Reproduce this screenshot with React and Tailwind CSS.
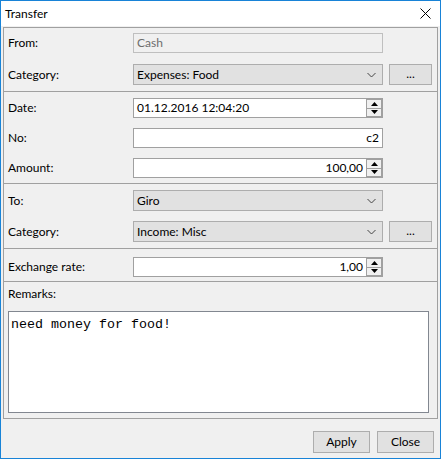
import React from "react";

const font = { fontFamily: "Lato, 'Noto Sans', sans-serif" };

function Chevron() {
  return (
    <svg width="9" height="6" viewBox="0 0 9 6" className="absolute right-[6px] top-1/2 -translate-y-1/2">
      <polyline points="0.5,1 4.5,5 8.5,1" fill="none" stroke="#444" strokeWidth="1" />
    </svg>
  );
}

function Combo({ text }) {
  return (
    <div className="relative w-[250px] h-[21px] border border-[#adadad] bg-[#e1e1e1] flex items-center pl-[3px] text-[12px] text-black">
      {text}
      <Chevron />
    </div>
  );
}

function DotsButton() {
  return (
    <div className="ml-[6px] w-[43px] h-[21px] border border-[#adadad] bg-[#e1e1e1] flex items-center justify-center text-[12px] text-black leading-none pb-[2px]">
      ...
    </div>
  );
}

function Spin() {
  return (
    <div className="flex flex-col h-full w-[16px] shrink-0">
      <div className="flex-1 border border-[#a0a0a0] bg-[#f0f0f0] flex items-center justify-center">
        <svg width="7" height="4" viewBox="0 0 7 4"><polygon points="3.5,0 7,4 0,4" fill="#000" /></svg>
      </div>
      <div className="flex-1 border border-t-0 border-[#a0a0a0] bg-[#f0f0f0] flex items-center justify-center">
        <svg width="7" height="4" viewBox="0 0 7 4"><polygon points="0,0 7,0 3.5,4" fill="#000" /></svg>
      </div>
    </div>
  );
}

function Edit({ text, right, spin }) {
  return (
    <div className="w-[250px] h-[20px] border border-[#a0a0a0] bg-white flex items-stretch text-[12px] text-black">
      <div className={"flex-1 flex items-center " + (right ? "justify-end pr-[3px]" : "pl-[3px]")}>{text}</div>
      {spin ? <Spin /> : null}
    </div>
  );
}

function Row({ label, children, className = "" }) {
  return (
    <div className={"flex items-center " + className}>
      <div className="w-[129px] pl-[4px] text-[12px] text-black">{label}</div>
      {children}
    </div>
  );
}

export default function App() {
  return (
    <div className="w-[441px] h-[459px] border border-[#1883d7] bg-[#f0f0f0] flex flex-col overflow-hidden" style={font}>
      <div className="h-[25px] bg-white flex items-center justify-between pl-[4px] pr-[9px] shrink-0">
        <span className="text-[12px] text-black">Transfer</span>
        <svg width="11" height="11" viewBox="0 0 11 11">
          <line x1="0.5" y1="0.5" x2="10.5" y2="10.5" stroke="#000" strokeWidth="1" />
          <line x1="10.5" y1="0.5" x2="0.5" y2="10.5" stroke="#000" strokeWidth="1" />
        </svg>
      </div>
      <div className="flex-1 flex flex-col px-[2px] pt-[1px]">
        <div className="border border-[#a0a0a0] flex flex-col">
          <div className="flex flex-col pt-[5px] pb-[6px] border-b border-[#a0a0a0]">
            <Row label="From:">
              <div className="w-[250px] h-[20px] border border-[#bfbfbf] bg-[#f0f0f0] flex items-center pl-[3px] text-[12px] text-[#6d6d6d]">Cash</div>
            </Row>
            <Row label="Category:" className="mt-[11px]">
              <Combo text="Expenses: Food" />
              <DotsButton />
            </Row>
          </div>
          <div className="flex flex-col pt-[6px] pb-[5px] border-b border-[#a0a0a0]">
            <Row label="Date:">
              <Edit text="01.12.2016 12:04:20" spin />
            </Row>
            <Row label="No:" className="mt-[10px]">
              <Edit text="c2" right />
            </Row>
            <Row label="Amount:" className="mt-[10px]">
              <Edit text="100,00" right spin />
            </Row>
          </div>
          <div className="flex flex-col pt-[6px] pb-[6px] border-b border-[#a0a0a0]">
            <Row label="To:">
              <Combo text="Giro" />
            </Row>
            <Row label="Category:" className="mt-[10px]">
              <Combo text="Income: Misc" />
              <DotsButton />
            </Row>
          </div>
          <div className="flex flex-col pt-[8px] pb-[4px] border-b border-[#a0a0a0]">
            <Row label="Exchange rate:">
              <Edit text="1,00" right spin />
            </Row>
          </div>
          <div className="flex flex-col pt-[4px] pb-[5px]">
            <div className="h-[16px] pl-[4px] text-[12px] text-black flex items-center">Remarks:</div>
            <div
              className="mt-[9px] ml-[4px] w-[421px] h-[102px] border border-[#828790] bg-white pl-[2px] pt-[5px] text-[13.33px] text-black leading-[16px]"
              style={{ fontFamily: "'Liberation Mono', monospace" }}
            >
              need money for food!
            </div>
          </div>
        </div>
        <div className="flex justify-end gap-[7px] pr-[4px] pt-[12px]">
          <div className="w-[57px] h-[22px] border border-[#adadad] bg-[#e1e1e1] flex items-center justify-center text-[12px] text-black">Apply</div>
          <div className="w-[57px] h-[22px] border border-[#adadad] bg-[#e1e1e1] flex items-center justify-center text-[12px] text-black">Close</div>
        </div>
      </div>
    </div>
  );
}
